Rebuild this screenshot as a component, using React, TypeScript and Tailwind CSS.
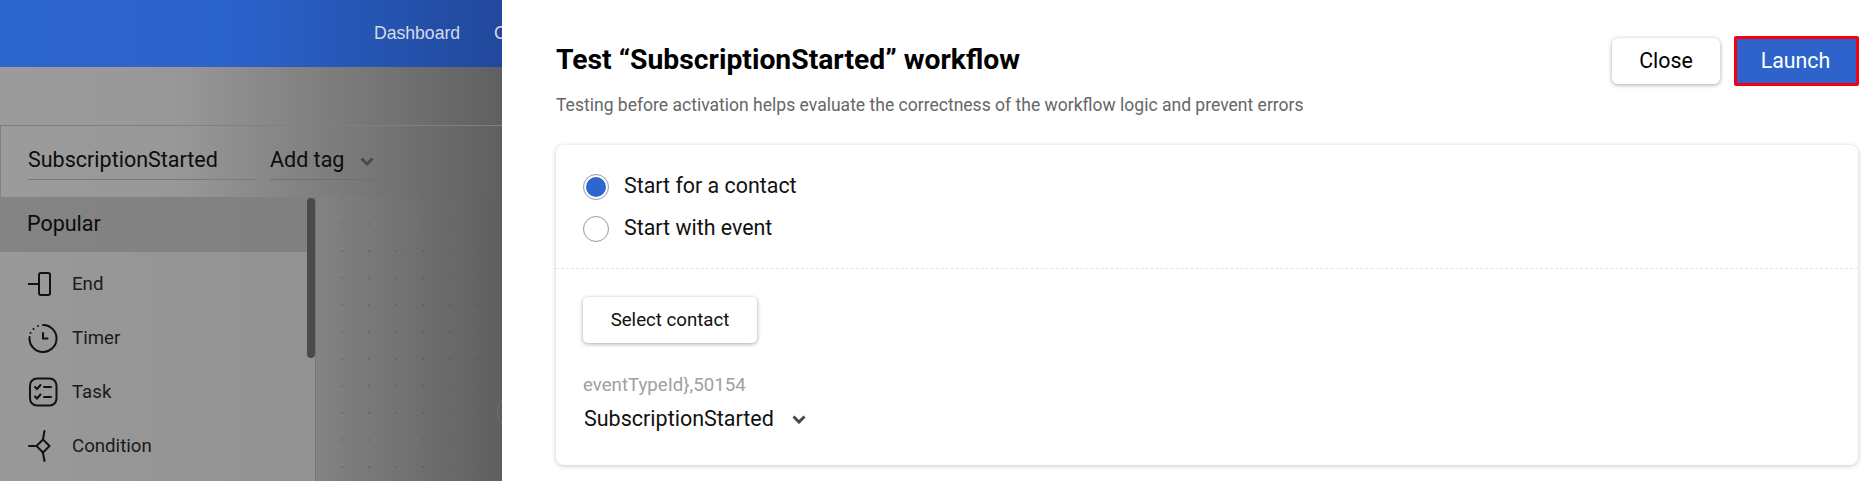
const sidebarItems = [
  {
    label: 'End',
    icon: (
      <svg width="30" height="30" viewBox="0 0 30 30" fill="none" stroke="#111" strokeWidth="2">
        <path d="M0 15h11" />
        <rect x="11" y="4" width="11" height="22" rx="2" />
      </svg>
    ),
  },
  {
    label: 'Timer',
    icon: (
      <svg width="30" height="30" viewBox="0 0 30 30" fill="none" stroke="#111" strokeWidth="2" strokeLinecap="round">
        <path d="M15 2a13.5 13.5 0 1 1-13.4 12" />
        <path d="M15 10v5.5h4.5" />
        <path d="M2.5 10v.01M5.5 6v.01M10 3v.01" />
      </svg>
    ),
  },
  {
    label: 'Task',
    icon: (
      <svg width="30" height="30" viewBox="0 0 30 30" fill="none" stroke="#111" strokeWidth="2" strokeLinecap="round">
        <rect x="2" y="1.5" width="26.5" height="27" rx="7" />
        <path d="M7 10l2 2 3.5-4M7 19.5l2 2 3.5-4M16 10h7M16 20h7" />
      </svg>
    ),
  },
  {
    label: 'Condition',
    icon: (
      <svg width="30" height="32" viewBox="0 0 30 32" fill="none" stroke="#111" strokeWidth="2" strokeLinecap="round">
        <path d="M1 16h6" />
        <path d="M15 9.5l6.5 6.5-6.5 6.5-6.5-6.5z" strokeLinejoin="round" />
        <path d="M16.5 1l-1.5 8M15 23l1.5 8" />
      </svg>
    ),
  },
];

function Chevron({ className }: { className?: string }) {
  return (
    <svg className={className} width="14" height="9" viewBox="0 0 14 9" fill="none" stroke="#4a4a4a" strokeWidth="3">
      <path d="M1.5 1.5L7 7l5.5-5.5" />
    </svg>
  );
}

function Radio({ checked, label }: { checked?: boolean; label: string }) {
  return (
    <label className="flex h-[26px] items-center gap-[15px]">
      <span className="flex h-[26px] w-[26px] items-center justify-center rounded-full border border-[#9a9a9a] bg-white">
        {checked && <span className="h-[20px] w-[20px] rounded-full bg-[#2d66cc]" />}
      </span>
      <span className="relative -top-[1px] text-[21.4px] text-[#111]">{label}</span>
    </label>
  );
}

export default function App() {
  return (
    <div className="flex h-[481px] w-[1869px] overflow-hidden bg-white font-['Roboto',sans-serif]">
      {/* Dimmed page behind the drawer */}
      <div className="flex h-full w-[502px] shrink-0 flex-col overflow-hidden bg-[linear-gradient(90deg,#9b9b9b_0%,#989898_35%,#606060_100%)]">
        <div className="flex h-[67px] shrink-0 items-center overflow-hidden bg-[linear-gradient(90deg,#2d66cc_0%,#2b63cc_45%,#21489c_100%)] pl-[374px] font-['Liberation_Sans',sans-serif] text-[17.6px] whitespace-nowrap text-[#d5dbe8]">
          <span className="mr-[34px]">Dashboard</span>
          <span>Contacts</span>
        </div>

        <div className="h-[58px] shrink-0" />

        <div className="flex h-[72px] shrink-0 items-start gap-[13px] border-t-[1.5px] border-l border-[#808080] pt-[19px] pl-[27px]">
          <div className="h-[35px] w-[229px] border-b border-[#7a7a7a] text-[21.5px] leading-[30px] text-[#0c0c0c]">
            SubscriptionStarted
          </div>
          <div className="flex h-[35px] w-[105px] items-start gap-[16px] border-b border-[#707070] text-[21.5px] leading-[30px] text-[#0c0c0c]">
            Add tag
            <Chevron className="mt-[12px]" />
          </div>
        </div>

        <div className="flex min-h-0 flex-1">
          <div className="relative w-[315px] shrink-0 overflow-hidden bg-[linear-gradient(90deg,#999999,#929292)]">
            <div className="flex h-[55px] items-center bg-[linear-gradient(90deg,#848484,#808080)] pl-[27px] text-[21.5px] text-[#0c0c0c]">
              Popular
            </div>
            <div className="flex flex-col pt-[5px] pl-[28px]">
              {sidebarItems.map((item) => (
                <div key={item.label} className="flex h-[54px] items-center gap-[14px] text-[18.67px] text-[#1a1a1a]">
                  <span className="flex w-[30px] justify-center">{item.icon}</span>
                  {item.label}
                </div>
              ))}
            </div>
            <div className="absolute top-[1px] right-0 h-[160px] w-[8px] rounded-full bg-[#4a4a4a]" />
          </div>
          <div className="relative flex-1 overflow-hidden border-l border-[#757575] bg-[radial-gradient(circle,#3f3f3f_0.7px,transparent_1px),linear-gradient(90deg,#838383,#5f5f5f)] bg-[size:27px_27px,100%_100%] bg-[position:12.5px_-13.5px,0_0]">
            <div className="absolute top-[195px] left-[181px] h-[40px] w-[40px] rounded-full border border-[#6f6f6f]" />
          </div>
        </div>
      </div>

      {/* Test workflow drawer */}
      <div className="flex min-w-0 flex-1 flex-col bg-white pr-[11px] pl-[54px]">
        <div className="flex h-[145px] shrink-0 items-start justify-between">
          <div className="pt-[44px]">
            <h1 className="text-[28.3px] leading-[32px] font-bold text-black">Test “SubscriptionStarted” workflow</h1>
            <p className="mt-[19px] text-[17.55px] leading-[20px] text-[#666]">
              Testing before activation helps evaluate the correctness of the workflow logic and prevent errors
            </p>
          </div>
          <div className="flex items-center gap-[14px] pt-[36px]">
            <button className="h-[46px] w-[108px] rounded-[6px] bg-white text-[21.33px] text-black shadow-[0_1px_4px_rgba(0,0,0,0.35)]">
              Close
            </button>
            <button className="-mr-[1px] h-[50px] w-[125px] rounded-[2px] border-[3px] border-[#f40011] bg-[#2d63cb] pr-[2px] text-[21.33px] text-white">
              Launch
            </button>
          </div>
        </div>

        <div className="h-[320px] shrink-0 rounded-[8px] bg-white shadow-[0_1px_5px_rgba(0,0,0,0.22)]">
          <div className="flex h-[124px] flex-col gap-[16px] border-b border-dashed border-[#e4e4e4] pt-[29px] pl-[27px]">
            <Radio checked label="Start for a contact" />
            <Radio label="Start with event" />
          </div>
          <div className="pt-[28px] pl-[27px]">
            <button className="h-[46px] w-[174px] rounded-[5px] bg-white text-[18.67px] text-[#111] shadow-[0_1px_4px_rgba(0,0,0,0.35)]">
              Select contact
            </button>
            <div className="mt-[30px] text-[18.67px] leading-[24px] text-[#a0a0a0]">{'eventTypeId},50154'}</div>
            <div className="mt-[8px] flex items-center gap-[18px] pl-[1px] text-[21.5px] leading-[28px] text-[#111]">
              SubscriptionStarted
              <Chevron />
            </div>
          </div>
        </div>
      </div>
    </div>
  );
}
